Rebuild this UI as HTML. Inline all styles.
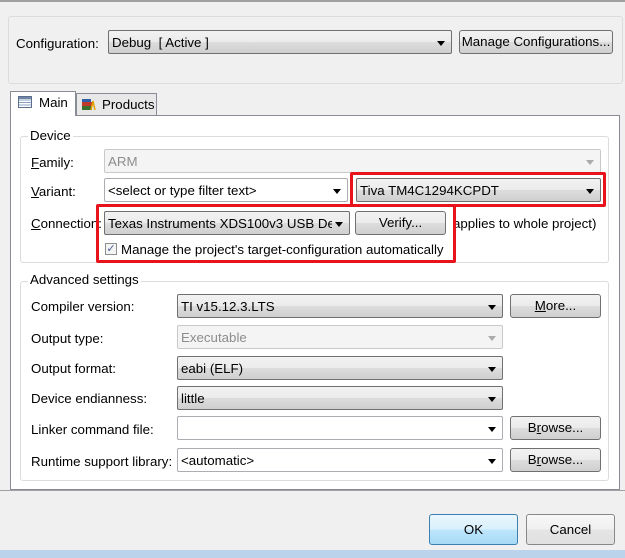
<!DOCTYPE html>
<html><head><style>
*{box-sizing:border-box;margin:0;padding:0}
body{width:625px;height:558px;background:#f0f0f0;font-family:"Liberation Sans",sans-serif;font-size:13.3px;color:#000;position:relative;overflow:hidden}
.a{position:absolute}
.combo{position:absolute;border:1px solid #707070;border-radius:2px;background:linear-gradient(#f2f2f2,#ebebeb 50%,#dddddd 51%,#cfcfcf);padding:4px 3px;white-space:nowrap;overflow:hidden;height:24px;line-height:15px}
.combo.w{background:#fff;border-color:#abadb3}
.combo.d{background:#f4f4f4;border-color:#c9c9c9;color:#8d8d8d}
.combo:after{content:"";position:absolute;right:6px;top:10px;border-left:4px solid transparent;border-right:4px solid transparent;border-top:5px solid #000}
.combo.d:after{border-top-color:#aaa}
.combo span{display:inline-block;max-width:calc(100% - 14px);overflow:hidden}
.btn{position:absolute;border:1px solid #707070;border-radius:3px;background:linear-gradient(#f2f2f2,#ebebeb 50%,#dddddd 51%,#cfcfcf);text-align:center;line-height:22px;height:24px;white-space:nowrap}
.grp{position:absolute;border:1px solid #dcdcdc;border-radius:3px}
.gl{position:absolute;background:#fff;padding:0 2px;line-height:14px}
.lbl{position:absolute;line-height:15px;white-space:nowrap}
.red{position:absolute;border:3px solid #e8141c;border-radius:2px}
u{text-decoration:underline}
</style></head><body>
<div class="a" style="left:0;top:0;width:625px;height:2px;background:#a0a0a0"></div>
<div class="a" style="left:8px;top:16px;width:615px;height:68px;border:1px solid #dcdcdc;border-radius:3px"></div>
<div class="lbl" style="left:16px;top:36px">Configuration:</div>
<div class="combo" style="left:108px;top:30px;width:344px;height:24px">Debug&nbsp; [ Active ]</div>
<div class="btn" style="left:459px;top:30px;width:154px">Manage Configurations...</div>

<!-- tab panel -->
<div class="a" style="left:10px;top:115px;width:610px;height:375px;background:#fff;border:1px solid #898c95"></div>
<div class="a" style="left:10px;top:91px;width:66px;height:25px;background:#fff;border:1px solid #898c95;border-bottom:none"></div>
<div class="a" style="left:76px;top:93px;width:81px;height:22px;background:#e8e8e8;border:1px solid #898c95;border-bottom:none"></div>
<svg class="a" style="left:18px;top:96px" width="14" height="12"><rect x="0.5" y="0.5" width="13" height="11" fill="#fff" stroke="#5b6f8c"/><path d="M1 4h12M1 6.5h12M1 9h12" stroke="#8aa0c0"/><rect x="1" y="1" width="12" height="2" fill="#6f86a8"/></svg>
<div class="lbl" style="left:39px;top:95px">Main</div>
<svg class="a" style="left:81px;top:98px" width="15" height="13"><rect x="1" y="8" width="10" height="4" fill="#3b6f2c"/><rect x="1" y="4" width="10" height="4" fill="#c0392b"/><rect x="1" y="1" width="9" height="3" fill="#2e5fa8"/><path d="M10 12L12 3l2 9" stroke="#e0a000" fill="none" stroke-width="1.5"/></svg>
<div class="lbl" style="left:102px;top:97px">Products</div>

<!-- Device -->
<div class="grp" style="left:20px;top:136px;width:589px;height:127px"></div>
<div class="gl" style="left:28px;top:129px">Device</div>
<div class="lbl" style="left:31px;top:155px"><u>F</u>amily:</div>
<div class="combo d" style="left:104px;top:149px;width:497px">ARM</div>
<div class="lbl" style="left:31px;top:184px"><u>V</u>ariant:</div>
<div class="combo w" style="left:104px;top:178px;width:244px">&lt;select or type filter text&gt;</div>
<div class="combo" style="left:356px;top:178px;width:245px">Tiva TM4C1294KCPDT</div>
<div class="red" style="left:350px;top:172px;width:256px;height:35px"></div>
<div class="lbl" style="left:31px;top:216px"><u>C</u>onnection:</div>
<div class="combo" style="left:104px;top:211px;width:246px"><span>Texas Instruments XDS100v3 USB Debug</span></div>
<div class="btn" style="left:355px;top:211px;width:91px">Verify...</div>
<div class="lbl" style="left:453px;top:216px">applies to whole project)</div>
<div class="a" style="left:105px;top:243px;width:12px;height:12px;border:1px solid #8e8f8f;background:#f4f4f4;font-size:11px;line-height:10px;text-align:center;color:#4a5f97">✓</div>
<div class="lbl" style="left:121px;top:242px">Manage the project's target-configuration automatically</div>
<div class="red" style="left:96px;top:204px;width:360px;height:59px"></div>

<!-- Advanced -->
<div class="grp" style="left:20px;top:281px;width:589px;height:200px"></div>
<div class="gl" style="left:28px;top:273px">Advanced settings</div>
<div class="lbl" style="left:31px;top:299px">Compiler version:</div>
<div class="combo" style="left:177px;top:294px;width:326px">TI v15.12.3.LTS</div>
<div class="btn" style="left:510px;top:294px;width:91px"><u>M</u>ore...</div>
<div class="lbl" style="left:31px;top:331px">Output type:</div>
<div class="combo d" style="left:177px;top:325px;width:326px">Executable</div>
<div class="lbl" style="left:31px;top:361px">Output format:</div>
<div class="combo" style="left:177px;top:356px;width:326px">eabi (ELF)</div>
<div class="lbl" style="left:31px;top:391px">Device endianness:</div>
<div class="combo" style="left:177px;top:386px;width:326px">little</div>
<div class="lbl" style="left:31px;top:422px">Linker command file:</div>
<div class="combo w" style="left:177px;top:416px;width:326px"></div>
<div class="btn" style="left:510px;top:416px;width:91px">B<u>r</u>owse...</div>
<div class="lbl" style="left:31px;top:454px">Runtime support library:</div>
<div class="combo w" style="left:177px;top:448px;width:326px">&lt;automatic&gt;</div>
<div class="btn" style="left:510px;top:448px;width:91px">B<u>r</u>owse...</div>

<div class="a" style="left:0;top:490px;width:625px;height:1px;background:#a0a0a0"></div>
<div class="btn" style="left:429px;top:514px;width:89px;height:31px;line-height:29px;border-color:#3c7fb1;background:linear-gradient(#eaf6fd,#d9f0fc 50%,#bee6fd 51%,#a7d9f5)">OK</div>
<div class="btn" style="left:526px;top:514px;width:89px;height:31px;line-height:29px;border-color:#888;background:linear-gradient(#f8f8f8,#f0f0f0 50%,#e5e5e5 51%,#e0e0e0)">Cancel</div>
<div class="a" style="left:0;top:550px;width:625px;height:8px;background:#bcd3ec"></div>
</body></html>
